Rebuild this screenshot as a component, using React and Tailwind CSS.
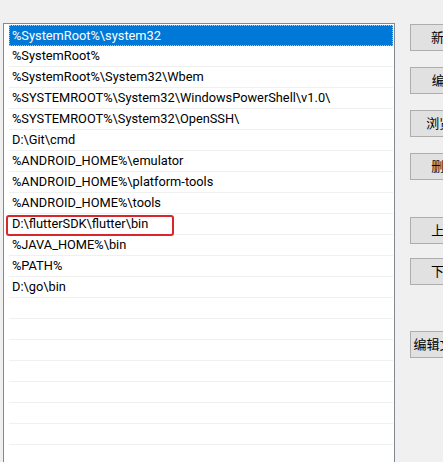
import React from 'react';

const paths = [
  '%SystemRoot%\\system32',
  '%SystemRoot%',
  '%SystemRoot%\\System32\\Wbem',
  '%SYSTEMROOT%\\System32\\WindowsPowerShell\\v1.0\\',
  '%SYSTEMROOT%\\System32\\OpenSSH\\',
  'D:\\Git\\cmd',
  '%ANDROID_HOME%\\emulator',
  '%ANDROID_HOME%\\platform-tools',
  '%ANDROID_HOME%\\tools',
  'D:\\flutterSDK\\flutter\\bin',
  '%JAVA_HOME%\\bin',
  '%PATH%',
  'D:\\go\\bin',
  '', '', '', '', '', '', '', '',
];

const Btn = ({ label, className = '' }) => (
  <button className={`w-[86px] h-[27px] shrink-0 bg-[#e1e1e1] border border-[#adadad] text-[13px] text-black whitespace-nowrap flex items-center justify-center ${className}`}>
    {label}
  </button>
);

export default function App() {
  return (
    <div
      className="w-[443px] h-[462px] overflow-hidden bg-[#f0f0f0] flex pt-[23px] pl-[3px]"
      style={{ fontFamily: 'Roboto, "Noto Sans CJK SC", sans-serif' }}
    >
      {/* list */}
      <div className="w-[392px] h-[460px] shrink-0 bg-white border border-[#828790] border-b-0 pt-px pl-[5px] pr-px">
        {paths.map((p, i) => (
          <div
            key={i}
            className={
              i === 0
                ? 'h-[21px] flex items-center pl-[3px] bg-[#0078d7] text-white outline-1 outline-dotted outline-[#9cc8ee] -outline-offset-1 text-[12.8px] whitespace-nowrap'
                : 'h-[21px] flex items-center pl-[3px] border-b border-[#f0f0f0] text-black text-[12.8px] whitespace-nowrap relative'
            }
          >
            {p}
            {p === 'D:\\flutterSDK\\flutter\\bin' && (
              <div className="absolute left-[-3px] top-[1px] w-[168px] h-[21px] border-2 border-[#d8262b] rounded-[3px]" />
            )}
          </div>
        ))}
      </div>

      {/* buttons */}
      <div className="flex flex-col pl-[15px] pt-px">
        <Btn label="新建(N)" />
        <Btn label="编辑(E)" className="mt-[16px]" />
        <Btn label="浏览(B)..." className="mt-[16px]" />
        <Btn label="删除(D)" className="mt-[16px]" />
        <Btn label="上移(U)" className="mt-[37px]" />
        <Btn label="下移(O)" className="mt-[14px]" />
        <Btn label="编辑文本(T)..." className="mt-[46px]" />
      </div>
    </div>
  );
}
